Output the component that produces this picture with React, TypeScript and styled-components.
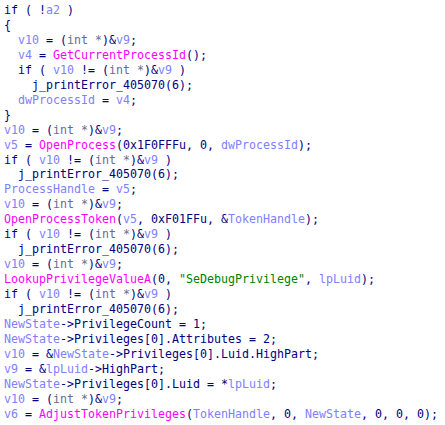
import React from "react";
import styled, { createGlobalStyle } from "styled-components";

const Global = createGlobalStyle`
  html, body { margin: 0; padding: 0; background: #ffffff; }
`;

type Kind = "k" | "v" | "f" | "s" | "c";

const colors: Record<Kind, string> = {
  k: "#000080",
  v: "#8080ff",
  f: "#ff00ff",
  s: "#008000",
  c: "#6b6b8f",
};

const Code = styled.pre`
  margin: 0;
  padding: 3px 0 0 4px;
  font-family: "DejaVu Sans Mono", "Liberation Mono", monospace;
  font-size: 11.63px;
  line-height: 14.96px;
  color: #000080;
  white-space: pre;
`;

const Line = styled.div<{ $indent: number }>`
  height: 14.96px;
  padding-left: ${(p) => p.$indent * 7}px;
`;

const Tok = styled.span<{ $k: Kind }>`
  color: ${(p) => colors[p.$k]};
`;

type Seg = [Kind, string];
const L = (indent: number, ...segs: Seg[]) => ({ indent, segs });

const cast: Seg[] = [["k", "("], ["c", "int *"], ["k", ")&"], ["v", "v9"]];
const v10 = (ind: number) => L(ind, ["v", "v10"], ["k", " = "], ...cast, ["k", ";"]);
const ifv = (ind: number) =>
  L(ind, ["k", "if ( "], ["v", "v10"], ["k", " != "], ...cast, ["k", " )"]);
const perr = (ind: number) => L(ind, ["k", "j_printError_405070(6);"]);

const lines = [
  L(0, ["k", "if ( !"], ["v", "a2"], ["k", " )"]),
  L(0, ["k", "{"]),
  v10(2),
  L(2, ["v", "v4"], ["k", " = "], ["f", "GetCurrentProcessId"], ["k", "();"]),
  ifv(2),
  perr(4),
  L(2, ["v", "dwProcessId"], ["k", " = "], ["v", "v4"], ["k", ";"]),
  L(0, ["k", "}"]),
  v10(0),
  L(0, ["v", "v5"], ["k", " = "], ["f", "OpenProcess"], ["k", "(0x1F0FFFu, 0, "], ["v", "dwProcessId"], ["k", ");"]),
  ifv(0),
  perr(2),
  L(0, ["v", "ProcessHandle"], ["k", " = "], ["v", "v5"], ["k", ";"]),
  v10(0),
  L(0, ["f", "OpenProcessToken"], ["k", "("], ["v", "v5"], ["k", ", 0xF01FFu, &"], ["v", "TokenHandle"], ["k", ");"]),
  ifv(0),
  perr(2),
  v10(0),
  L(0, ["f", "LookupPrivilegeValueA"], ["k", "(0, "], ["s", "\"SeDebugPrivilege\""], ["k", ", "], ["v", "lpLuid"], ["k", ");"]),
  ifv(0),
  perr(2),
  L(0, ["v", "NewState"], ["k", "->PrivilegeCount = 1;"]),
  L(0, ["v", "NewState"], ["k", "->Privileges[0].Attributes = 2;"]),
  L(0, ["v", "v10"], ["k", " = &"], ["v", "NewState"], ["k", "->Privileges[0].Luid.HighPart;"]),
  L(0, ["v", "v9"], ["k", " = &"], ["v", "lpLuid"], ["k", "->HighPart;"]),
  L(0, ["v", "NewState"], ["k", "->Privileges[0].Luid = *"], ["v", "lpLuid"], ["k", ";"]),
  v10(0),
  L(0, ["v", "v6"], ["k", " = "], ["f", "AdjustTokenPrivileges"], ["k", "("], ["v", "TokenHandle"], ["k", ", 0, "], ["v", "NewState"], ["k", ", 0, 0, 0);"]),
];

export default function App() {
  return (
    <>
      <Global />
      <Code>
        {lines.map((ln, i) => (
          <Line key={i} $indent={ln.indent}>
            {ln.segs.map(([k, t], j) => (
              <Tok key={j} $k={k}>
                {t}
              </Tok>
            ))}
          </Line>
        ))}
      </Code>
    </>
  );
}
